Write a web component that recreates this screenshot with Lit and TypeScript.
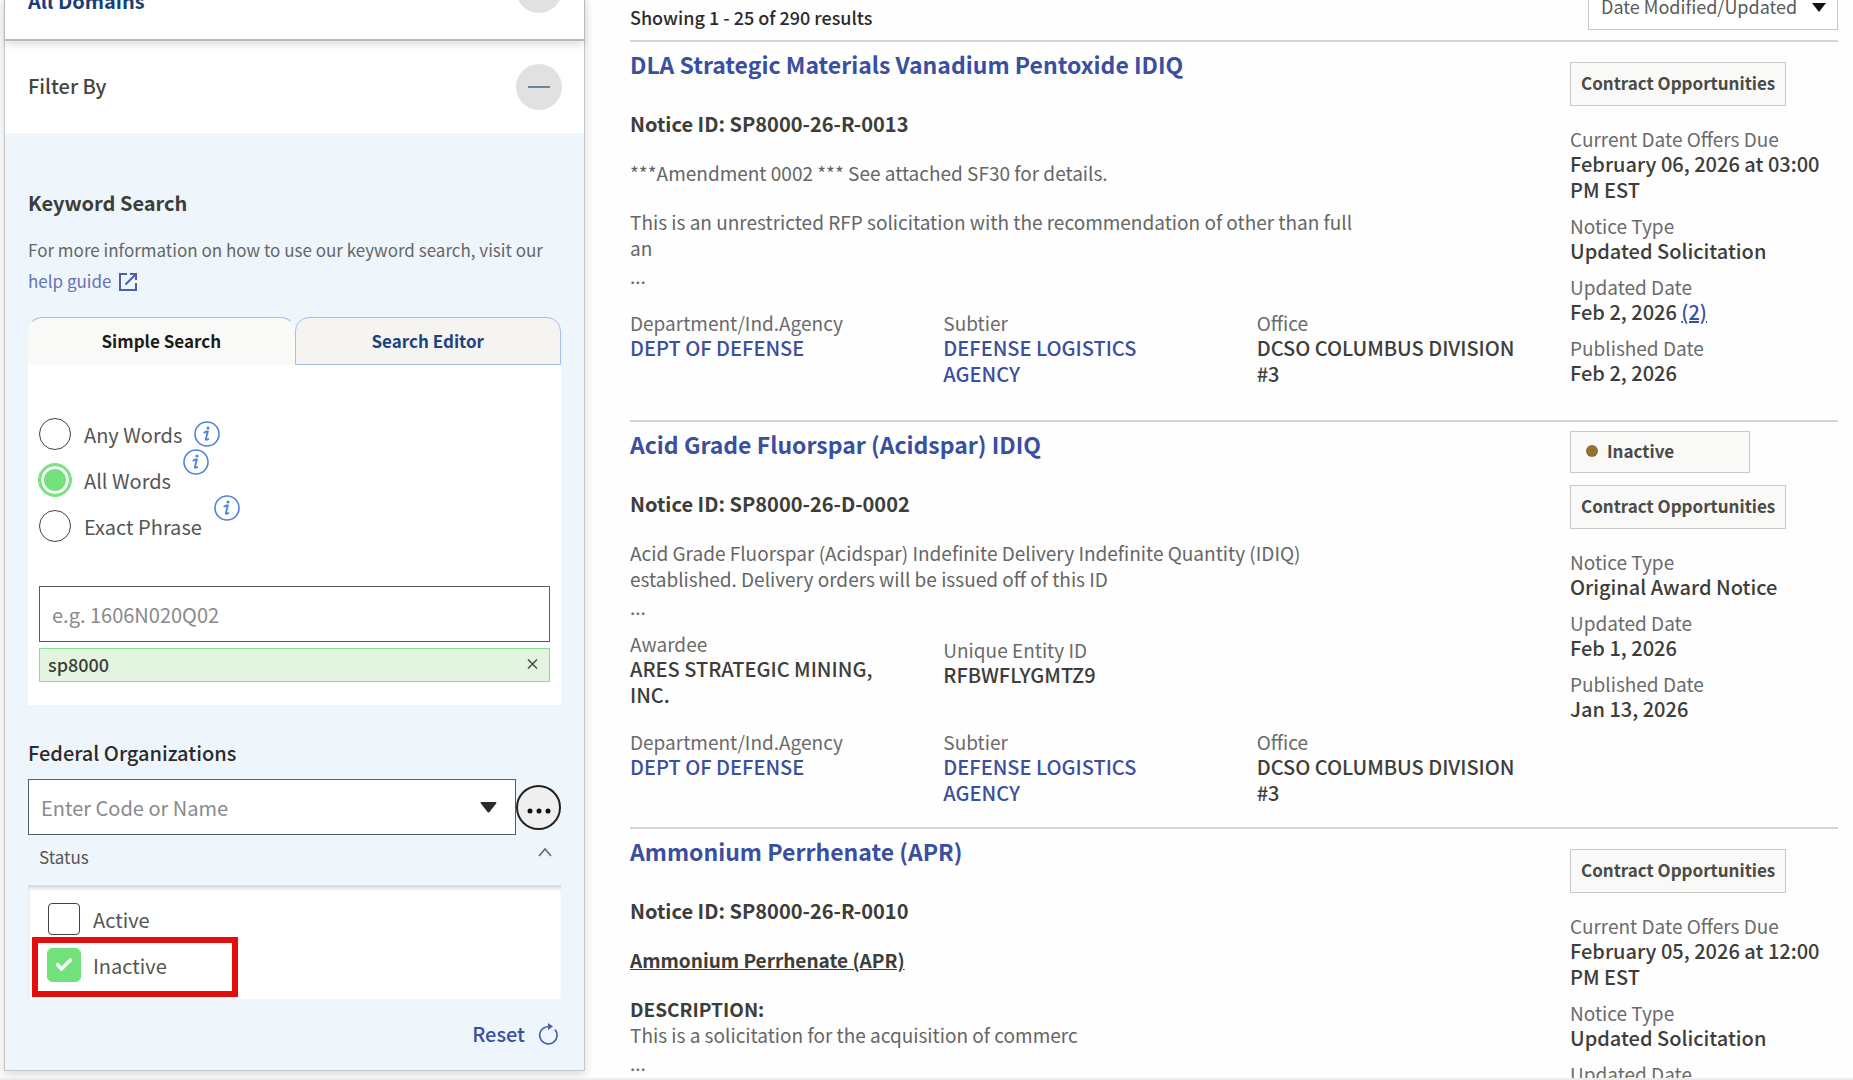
import { LitElement, html, css, nothing, TemplateResult } from "lit";
import { customElement, property } from "lit/decorators.js";

interface Field {
  label: string;
  value: string;
  link?: boolean;
  extra?: string;
  low?: boolean;
}

interface Notice {
  title: string;
  id: string;
  body: TemplateResult;
  award?: Field[];
  org?: Field[];
  inactive?: boolean;
  facts: Field[];
}

const agency: Field[] = [
  { label: "Department/Ind.Agency", value: "DEPT OF DEFENSE", link: true },
  { label: "Subtier", value: "DEFENSE LOGISTICS AGENCY", link: true },
  { label: "Office", value: "DCSO COLUMBUS DIVISION #3" },
];

const notices: Notice[] = [
  {
    title: "DLA Strategic Materials Vanadium Pentoxide IDIQ",
    id: "SP8000-26-R-0013",
    body: html`<p>***Amendment 0002 *** See attached SF30 for details.</p>
      <p>This is an unrestricted RFP solicitation with the recommendation of other than full an</p>`,
    org: agency,
    facts: [
      { label: "Current Date Offers Due", value: "February 06, 2026 at 03:00 PM EST" },
      { label: "Notice Type", value: "Updated Solicitation" },
      { label: "Updated Date", value: "Feb 2, 2026", extra: "(2)" },
      { label: "Published Date", value: "Feb 2, 2026" },
    ],
  },
  {
    title: "Acid Grade Fluorspar (Acidspar) IDIQ",
    id: "SP8000-26-D-0002",
    body: html`<p>Acid Grade Fluorspar (Acidspar) Indefinite Delivery Indefinite Quantity (IDIQ) established. Delivery orders will be issued off of this ID</p>`,
    award: [
      { label: "Awardee", value: "ARES STRATEGIC MINING, INC." },
      { label: "Unique Entity ID", value: "RFBWFLYGMTZ9", low: true },
    ],
    org: agency,
    inactive: true,
    facts: [
      { label: "Notice Type", value: "Original Award Notice" },
      { label: "Updated Date", value: "Feb 1, 2026" },
      { label: "Published Date", value: "Jan 13, 2026" },
    ],
  },
  {
    title: "Ammonium Perrhenate (APR)",
    id: "SP8000-26-R-0010",
    body: html`<p><strong><u>Ammonium Perrhenate (APR)</u></strong></p>
      <p><strong>DESCRIPTION:</strong><br />This is a solicitation for the acquisition of commerc</p>`,
    facts: [
      { label: "Current Date Offers Due", value: "February 05, 2026 at 12:00 PM EST" },
      { label: "Notice Type", value: "Updated Solicitation" },
      { label: "Updated Date", value: "" },
    ],
  },
];

const base = css`
  * {
    box-sizing: border-box;
  }
  h1, h2, h3, p, dl, dd {
    margin: 0;
    padding: 0;
    border: 0;
  }
  button, input, select {
    font: inherit;
    color: inherit;
    margin: 0;
  }
  a {
    color: #3a4fa0;
    text-decoration: none;
  }
`;

@customElement("notice-card")
export class NoticeCard extends LitElement {
  @property({ attribute: false }) notice!: Notice;

  static styles = [
    base,
    css`
      :host {
        display: grid;
        grid-template-columns: 940fr 268fr;
        border-top: 2px solid #d3d4d6;
        padding-bottom: 21px;
      }
      .title {
        font-size: 23px;
        line-height: 32px;
        font-weight: 700;
        padding-top: 6px;
      }
      .notice-id {
        font-size: 20px;
        line-height: 28px;
        font-weight: 700;
        color: #3d3d3a;
        margin-top: 30px;
      }
      .body {
        width: 78%;
        font-size: 19px;
        line-height: 26px;
        color: #666;
        margin-top: 22px;
      }
      .body p + p {
        margin-top: 23px;
      }
      .body strong {
        color: #3d3d3a;
      }
      .more {
        font-size: 19px;
        line-height: 30px;
        color: #666;
      }
      .fields {
        display: grid;
        grid-template-columns: repeat(3, 1fr);
        margin-top: 20px;
      }
      .fields.award {
        margin-top: 10px;
      }
      .fields.award + .fields {
        margin-top: 22px;
      }
      .fields > div {
        padding-right: 44px;
      }
      .fields > .low {
        padding-top: 6px;
      }
      dt {
        font-size: 19px;
        line-height: 24px;
        color: #6b6b6b;
      }
      dd {
        font-size: 20px;
        line-height: 26px;
        font-weight: 500;
        color: #3d3d3a;
      }
      .facts > div + div {
        margin-top: 11px;
      }
      .facts a {
        text-decoration: underline;
      }
      .side {
        padding: 20px 0 13px;
      }
      .side.inactive {
        padding-top: 9px;
      }
      .tag {
        display: flex;
        align-items: center;
        width: fit-content;
        height: 44px;
        padding: 0 10px 3px;
        border: 1px solid #c9c9c9;
        background: #f9f9f7;
        font-size: 17px;
        font-weight: 700;
        color: #4a4a47;
        margin-bottom: 21px;
      }
      .tag.state {
        width: 180px;
        height: 42px;
        padding: 0 15px 3px;
        gap: 9px;
        margin-bottom: 12px;
      }
      .dot {
        width: 12px;
        height: 12px;
        border-radius: 50%;
        background: #936f38;
      }
    `,
  ];

  private field(f: Field) {
    return html`<div class=${f.low ? "low" : ""}>
      <dt>${f.label}</dt>
      <dd>${f.link ? html`<a href="#">${f.value}</a>` : f.value}${f.extra ? html` <a href="#">${f.extra}</a>` : nothing}</dd>
    </div>`;
  }

  render() {
    const n = this.notice;
    return html`
      <div>
        <h3 class="title"><a href="#">${n.title}</a></h3>
        <p class="notice-id">Notice ID: ${n.id}</p>
        <div class="body">${n.body}</div>
        <div class="more">...</div>
        ${n.award ? html`<dl class="fields award">${n.award.map((f) => this.field(f))}</dl>` : nothing}
        ${n.org ? html`<dl class="fields">${n.org.map((f) => this.field(f))}</dl>` : nothing}
      </div>
      <div class="side ${n.inactive ? "inactive" : ""}">
        ${n.inactive ? html`<div class="tag state"><span class="dot"></span>Inactive</div>` : nothing}
        <div class="tag">Contract Opportunities</div>
        <dl class="facts">${n.facts.map((f) => this.field(f))}</dl>
      </div>
    `;
  }
}

@customElement("filter-panel")
export class FilterPanel extends LitElement {
  static styles = [
    base,
    css`
      :host {
        display: block;
        border: 1px solid #c4c6c9;
        border-top: 0;
        background: #eff6fb;
        box-shadow: 0 4px 10px rgba(0, 0, 0, 0.14);
      }
      .bar {
        display: flex;
        align-items: center;
        justify-content: space-between;
        height: 92px;
        padding: 0 22px 0 23px;
        background: #fff;
        font-size: 20px;
        line-height: 28px;
        font-weight: 500;
        color: #454540;
      }
      .bar span {
        padding-bottom: 3px;
      }
      .bar.domains {
        font-weight: 700;
        color: #1a3f78;
        margin-top: -56px;
        height: 97px;
        padding-bottom: 3px;
        border-bottom: 2px solid #b9b9b9;
        position: relative;
        box-shadow: 0 4px 8px rgba(0, 0, 0, 0.12);
      }
      .bar.domains span {
        padding: 22px 0 0;
      }
      .round {
        width: 46px;
        height: 46px;
        border: 0;
        border-radius: 50%;
        padding: 0;
        background: #e1e1e1;
        display: grid;
        place-items: center;
      }
      .content {
        padding: 56px 23px 20px;
      }
      .heading {
        font-size: 20px;
        line-height: 28px;
        font-weight: 700;
        color: #3d3d3a;
      }
      .hint {
        font-size: 17px;
        line-height: 31px;
        color: #666;
        margin-top: 17px;
      }
      .hint a {
        color: #6473b4;
      }
      .hint svg {
        vertical-align: -3px;
        margin-left: 4px;
      }
      .tabs {
        display: grid;
        grid-template-columns: 1fr 1fr;
        margin-top: 21px;
      }
      .tab {
        height: 48px;
        padding: 0 0 2px;
        font-size: 17px;
        font-weight: 700;
        border: 1px solid #a3c0f0;
        border-radius: 14px 14px 0 0;
        background: #f5f4f0;
        color: #1d4380;
      }
      .tab.active {
        border-color: #a3c0f0 transparent transparent;
        background: #f9f9f7;
        color: #1b1b1b;
      }
      .box {
        background: #fff;
        padding: 46px 11px 23px;
      }
      .choice {
        display: flex;
        height: 46px;
        align-items: center;
      }
      label {
        font-size: 20px;
        color: #555;
      }
      .choice input {
        appearance: none;
        width: 32px;
        height: 32px;
        border: 1px solid #444;
        border-radius: 50%;
        background: #fff;
        margin-right: 13px;
        flex: none;
      }
      .choice input:checked {
        border: 2px solid #70e17b;
        outline: 1px solid #70e17b;
        background: #70e17b;
        box-shadow: inset 0 0 0 3px #fff;
      }
      .info {
        width: 26px;
        height: 26px;
        border: 0;
        padding: 0;
        background: none;
        margin-left: 12px;
      }
      .choice .raised {
        margin-bottom: 36px;
      }
      .text {
        width: 100%;
        height: 56px;
        border: 1px solid #565c65;
        background: #fff;
        padding: 0 12px;
        font-size: 20px;
        border-radius: 0;
        display: block;
      }
      .text::placeholder {
        color: #8a8a8a;
        opacity: 1;
      }
      .keyword {
        margin-top: 37px;
      }
      .chip {
        display: flex;
        align-items: center;
        justify-content: space-between;
        height: 34px;
        margin-top: 6px;
        padding: 0 8px 2px;
        border: 1px solid #86e08d;
        background: #e3f5e1;
        color: #3d3d3a;
        font-size: 18px;
        line-height: 28px;
        font-weight: 500;
      }
      .icon {
        border: 0;
        padding: 0;
        background: none;
        display: grid;
        place-items: center;
      }
      .orgs {
        font-weight: 500;
        color: #2b2b2b;
        margin-top: 34px;
        display: block;
      }
      .org-row {
        display: flex;
        align-items: center;
        margin-top: 12px;
      }
      .combo {
        flex: 1;
        display: flex;
        align-items: center;
        height: 56px;
        border: 1px solid #565c65;
        background: #fff;
        padding-right: 18px;
      }
      .combo .text {
        height: 54px;
        border: 0;
        flex: 1;
      }
      .dots {
        width: 45px;
        height: 45px;
        border: 2px solid #222;
        background: #efefef;
      }
      .status {
        display: flex;
        align-items: center;
        justify-content: space-between;
        height: 50px;
        padding: 0 9px 8px 11px;
        font-size: 17px;
        color: #555;
      }
      .status .icon {
        padding-bottom: 6px;
      }
      .checks {
        background: #fff;
        border-top: 2px solid #d9dde0;
        box-shadow: inset 1px 2px 3px rgba(0, 0, 0, 0.12);
        padding: 9px 20px 11px;
        position: relative;
      }
      .choice .check {
        border-radius: 4px;
        margin-right: 13px;
      }
      .choice .check:checked {
        box-shadow: none;
        background: #70e17b;
      }
      .tickbox {
        display: grid;
      }
      .tickbox > * {
        grid-area: 1 / 1;
      }
      .tickbox svg {
        margin: 6px;
        pointer-events: none;
      }
      .marker {
        position: absolute;
        left: 4px;
        bottom: 2px;
        width: 206px;
        height: 60px;
        border: 6px solid #e50c0c;
        pointer-events: none;
      }
      .reset {
        display: flex;
        align-items: center;
        gap: 13px;
        margin: 19px 3px 0 auto;
        border: 0;
        padding: 0;
        background: none;
        font-size: 20px;
        line-height: 32px;
        font-weight: 500;
        color: #3a4fa0;
      }
    `,
  ];

  private radio(id: string, text: string, checked: boolean, raised: boolean) {
    return html`<div class="choice">
      <input type="radio" name="match" id=${id} .checked=${checked} />
      <label for=${id}>${text}</label>
      <button class="info ${raised ? "raised" : ""}" aria-label="About ${text}">
        <svg width="26" height="26" viewBox="0 0 26 26" fill="none" stroke="#4c80dc">
          <circle cx="13" cy="13" r="12" stroke-width="1.6" />
          <circle cx="14" cy="7" r="1.5" fill="#4c80dc" stroke="none" />
          <path d="M10.300 11.600c1.200-.9 2.200-1.200 3.500-1.100l-1.900 7.400c-.3 1.400.9 1.300 2.400.1" stroke-width="1.800" stroke-linecap="round" />
        </svg>
      </button>
    </div>`;
  }

  private check(id: string, text: string, checked: boolean) {
    return html`<div class="choice">
      <span class="tickbox">
        <input class="check" type="checkbox" id=${id} .checked=${checked} />
        ${checked
          ? html`<svg width="20" height="20" viewBox="0 0 20 20"><path d="M3.500 9.500l4 4.500L16.500 5" fill="none" stroke="#fff" stroke-width="3.500" stroke-linecap="round" /></svg>`
          : nothing}
      </span>
      <label for=${id}>${text}</label>
    </div>`;
  }

  render() {
    return html`
      <div class="bar domains">
        <span>All Domains</span>
        <button class="round" aria-label="Expand domains"></button>
      </div>
      <div class="bar">
        <span>Filter By</span>
        <button class="round" aria-label="Collapse filters">
          <svg width="22" height="4" viewBox="0 0 22 4"><rect y="1" width="22" height="2" fill="#71809c" /></svg>
        </button>
      </div>
      <div class="content">
        <h2 class="heading">Keyword Search</h2>
        <p class="hint">
          For more information on how to use our keyword search, visit our
          <a href="#">help guide
            <svg width="18" height="18" viewBox="0 0 18 18" fill="none" stroke="#4a5fae" stroke-width="2"><path d="M8 1H1v16h16v-7M11 1h6v6M17 1L6.500 11.500" /></svg></a>
        </p>
        <div class="tabs" role="tablist">
          <button class="tab active" role="tab">Simple Search</button>
          <button class="tab" role="tab">Search Editor</button>
        </div>
        <div class="box">
          ${this.radio("any", "Any Words", false, false)}
          ${this.radio("all", "All Words", true, true)}
          ${this.radio("exact", "Exact Phrase", false, true)}
          <input class="text keyword" aria-label="Keyword" placeholder="e.g. 1606N020Q02" />
          <div class="chip">
            <span>sp8000</span>
            <button class="icon" aria-label="Remove sp8000">
              <svg width="17" height="12" viewBox="0 0 17 12"><path d="M4 1.500l9 9M13 1.500l-9 9" stroke="#4a4a4a" stroke-width="1.500" /></svg>
            </button>
          </div>
        </div>
        <label class="heading orgs" for="org">Federal Organizations</label>
        <div class="org-row">
          <div class="combo">
            <input class="text" id="org" placeholder="Enter Code or Name" />
            <button class="icon" aria-label="Open list">
              <svg width="17" height="11" viewBox="0 0 17 11"><path d="M1.500 0h14q1.500 0 .6 1.500L9.500 10q-1 1.200-2 0L.9 1.500Q0 0 1.500 0z" fill="#2b2b2b" /></svg>
            </button>
          </div>
          <button class="round dots" aria-label="Browse organizations">
            <svg width="24" height="16" viewBox="0 0 24 16" fill="#111"><circle cx="3" cy="12" r="2.500" /><circle cx="12" cy="12" r="2.500" /><circle cx="21" cy="12" r="2.500" /></svg>
          </button>
        </div>
        <div class="status">
          <span>Status</span>
          <button class="icon" aria-label="Collapse status">
            <svg width="14" height="18" viewBox="0 0 14 18"><path d="M1 12l6-7 6 7" fill="none" stroke="#666" stroke-width="1.600" /></svg>
          </button>
        </div>
        <div class="checks">
          ${this.check("active", "Active", false)} ${this.check("inactive", "Inactive", true)}
          <div class="marker"></div>
        </div>
        <button class="reset">
          Reset
          <svg width="20" height="22" viewBox="0 0 20 22"><path d="M5.700 4.900A8.700 8.700 0 1 0 17 6.600M5.700 4.900Q8 3.500 11 3.500" fill="none" stroke="#4a5fae" stroke-width="1.700" /><path d="M10 0l5 3.500-5 3.500z" fill="#4a5fae" /></svg>
        </button>
      </div>
    `;
  }
}

@customElement("app-root")
export class AppRoot extends LitElement {
  static styles = [
    base,
    css`
      :host {
        display: block;
        height: 100vh;
        overflow: hidden;
        background: #fefefe;
        border-bottom: 2px solid #ececec;
        box-sizing: border-box;
        font-family: "Noto Sans CJK SC", "Open Sans", sans-serif;
      }
      .page {
        display: grid;
        grid-template-columns: 581fr 1208fr;
        align-items: start;
        gap: 45px;
        padding: 0 15px 0 4px;
      }
      .top {
        display: flex;
        justify-content: space-between;
        align-items: flex-start;
        height: 40px;
      }
      .count {
        font-size: 18px;
        line-height: 26px;
        font-weight: 500;
        color: #2b2b2b;
        padding-top: 4px;
      }
      .sort {
        display: grid;
        margin-top: -27px;
        width: 250px;
      }
      .sort > * {
        grid-area: 1 / 1;
      }
      .sort select {
        appearance: none;
        width: 100%;
        height: 57px;
        padding: 9px 12px 0;
        border: 1px solid #c4c6c9;
        border-radius: 0;
        background: #fff;
        color: #5a5a5a;
        font-size: 18px;
      }
      .sort svg {
        justify-self: end;
        margin: 29px 12px 0;
        pointer-events: none;
      }
    `,
  ];

  render() {
    return html`
      <div class="page">
        <filter-panel></filter-panel>
        <main>
          <div class="top">
            <span class="count">Showing 1 - 25 of 290 results</span>
            <div class="sort">
              <select aria-label="Sort by">
                <option>Date Modified/Updated</option>
              </select>
              <svg width="14" height="10" viewBox="0 0 14 10"><path d="M0 1h14L7 10z" fill="#111" /></svg>
            </div>
          </div>
          ${notices.map((n) => html`<notice-card .notice=${n}></notice-card>`)}
        </main>
      </div>
    `;
  }
}
